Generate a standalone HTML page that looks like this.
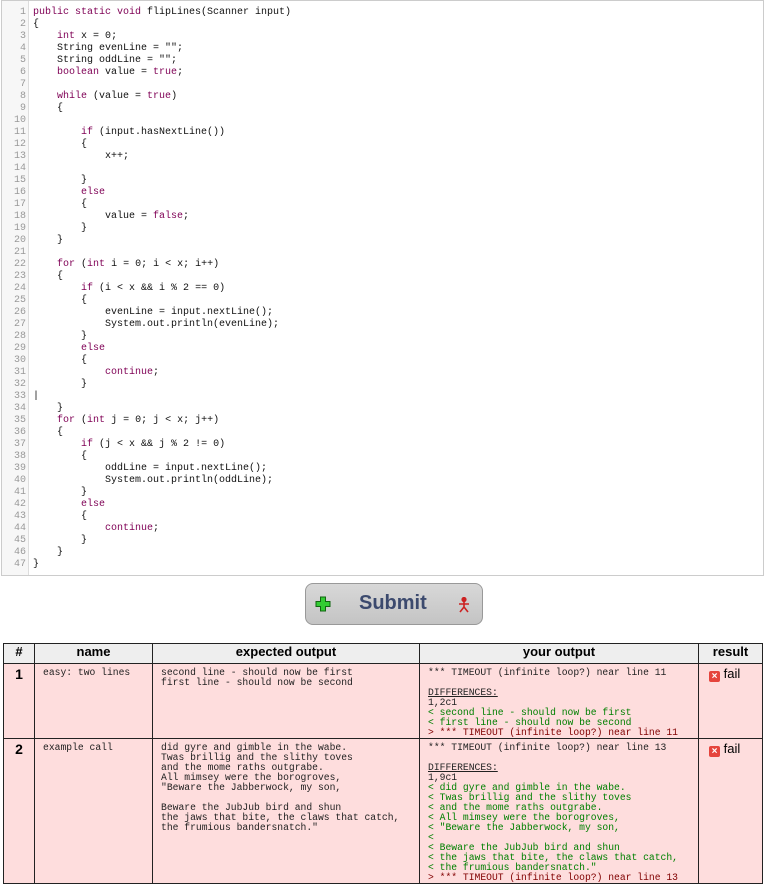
<!DOCTYPE html>
<html><head><meta charset="utf-8"><style>
body{margin:0;background:#fff;font-family:"Liberation Sans",sans-serif;width:764px;height:886px;overflow:hidden;position:relative}
#ed{position:absolute;left:1px;top:0;width:761px;height:574px;border:1px solid #ccc;background:#fff}
#gut{position:absolute;left:0;top:0;width:26px;height:574px;background:#f7f7f7;border-right:1px solid #ddd}
pre{margin:0;font-family:"Liberation Mono",monospace}
#nums{position:absolute;left:0;top:6px;width:24px;text-align:right;font-size:10px;line-height:12px;color:#999}
#code{position:absolute;left:31px;top:6px;font-size:10px;line-height:12px;color:#111}
.k{color:#7f0055}.v{color:#111}
#btn{position:absolute;left:305px;top:583px;width:176px;height:40px;border:1px solid #999;border-radius:8px;background:linear-gradient(#d8d8d8,#c4c4c4)}
#btn span{position:absolute;left:53px;top:8px;font-size:20px;font-weight:bold;color:#3c4a6e}
table{position:absolute;left:3px;top:643px;border-collapse:collapse;width:760px}
td,th{border:1px solid #222;vertical-align:top;padding:0}
th{background:#eee;height:19px;font-size:13px;font-weight:bold;text-align:center}
tr.f td{background:#fedddd}
td pre{font-size:9.7px;line-height:10px;padding:4px 8px 0;color:#222}
.n{font-weight:bold;font-size:14px;text-align:center;padding-top:2px}
.g{color:#008000}.r{color:#800000}
.fail{font-size:13px;padding:2px 10px}
.x{display:inline-block;width:11px;height:11px;background:#e5443c;color:#fff;font-size:10px;line-height:11px;text-align:center;border-radius:2px;font-weight:bold;vertical-align:-1px}
</style></head><body>
<div id="ed"><div id="gut"></div>
<pre id="nums">1
2
3
4
5
6
7
8
9
10
11
12
13
14
15
16
17
18
19
20
21
22
23
24
25
26
27
28
29
30
31
32
33
34
35
36
37
38
39
40
41
42
43
44
45
46
47</pre>
<pre id="code"><span class="k">public static void</span> flipLines(Scanner input)
{
    <span class="k">int</span> x = <span class="v">0</span>;
    String evenLine = <span class="v">""</span>;
    String oddLine = <span class="v">""</span>;
    <span class="k">boolean</span> value = <span class="k">true</span>;

    <span class="k">while</span> (value = <span class="k">true</span>)
    {

        <span class="k">if</span> (input.hasNextLine())
        {
            x++;

        }
        <span class="k">else</span>
        {
            value = <span class="k">false</span>;
        }
    }

    <span class="k">for</span> (<span class="k">int</span> i = <span class="v">0</span>; i &lt; x; i++)
    {
        <span class="k">if</span> (i &lt; x &amp;&amp; i % <span class="v">2</span> == <span class="v">0</span>)
        {
            evenLine = input.nextLine();
            System.out.println(evenLine);
        }
        <span class="k">else</span>
        {
            <span class="k">continue</span>;
        }
|
    }
    <span class="k">for</span> (<span class="k">int</span> j = <span class="v">0</span>; j &lt; x; j++)
    {
        <span class="k">if</span> (j &lt; x &amp;&amp; j % <span class="v">2</span> != <span class="v">0</span>)
        {
            oddLine = input.nextLine();
            System.out.println(oddLine);
        }
        <span class="k">else</span>
        {
            <span class="k">continue</span>;
        }
    }
}</pre></div>
<div id="btn">
<svg style="position:absolute;left:9px;top:12px" width="16" height="16" viewBox="0 0 16 16"><path d="M5.5 1h5v4.5H15v5h-4.5V15h-5v-4.5H1v-5h4.5z" fill="#3c3" stroke="#161" stroke-width="1"/></svg>
<span>Submit</span>
<svg style="position:absolute;left:151px;top:13px" width="14" height="16" viewBox="0 0 14 16"><g stroke="#c22" stroke-width="1.6" fill="none"><circle cx="7" cy="2.5" r="1.8" fill="#c22"/><path d="M7 5v5M2 7h10M7 10l-4 5M7 10l4 5"/></g></svg>
</div>
<table>
<tr><th style="width:30px">#</th><th style="width:117px">name</th><th style="width:266px">expected output</th><th style="width:278px">your output</th><th>result</th></tr>
<tr class="f" style="height:74px"><td class="n">1</td><td><pre>easy: two lines</pre></td><td><pre>second line - should now be first
first line - should now be second</pre></td><td><pre>*** TIMEOUT (infinite loop?) near line 11

<u>DIFFERENCES:</u>
1,2c1
<span class="g">&lt; second line - should now be first
&lt; first line - should now be second</span>
<span class="r">&gt; *** TIMEOUT (infinite loop?) near line 11</span></pre></td><td class="fail"><span class="x">×</span> fail</td></tr>
<tr class="f" style="height:144px"><td class="n">2</td><td><pre>example call</pre></td><td><pre>did gyre and gimble in the wabe.
Twas brillig and the slithy toves
and the mome raths outgrabe.
All mimsey were the borogroves,
"Beware the Jabberwock, my son,

Beware the JubJub bird and shun
the jaws that bite, the claws that catch,
the frumious bandersnatch."</pre></td><td><pre>*** TIMEOUT (infinite loop?) near line 13

<u>DIFFERENCES:</u>
1,9c1
<span class="g">&lt; did gyre and gimble in the wabe.
&lt; Twas brillig and the slithy toves
&lt; and the mome raths outgrabe.
&lt; All mimsey were the borogroves,
&lt; "Beware the Jabberwock, my son,
&lt;
&lt; Beware the JubJub bird and shun
&lt; the jaws that bite, the claws that catch,
&lt; the frumious bandersnatch."</span>
<span class="r">&gt; *** TIMEOUT (infinite loop?) near line 13</span></pre></td><td class="fail"><span class="x">×</span> fail</td></tr>
</table>
</body></html>
